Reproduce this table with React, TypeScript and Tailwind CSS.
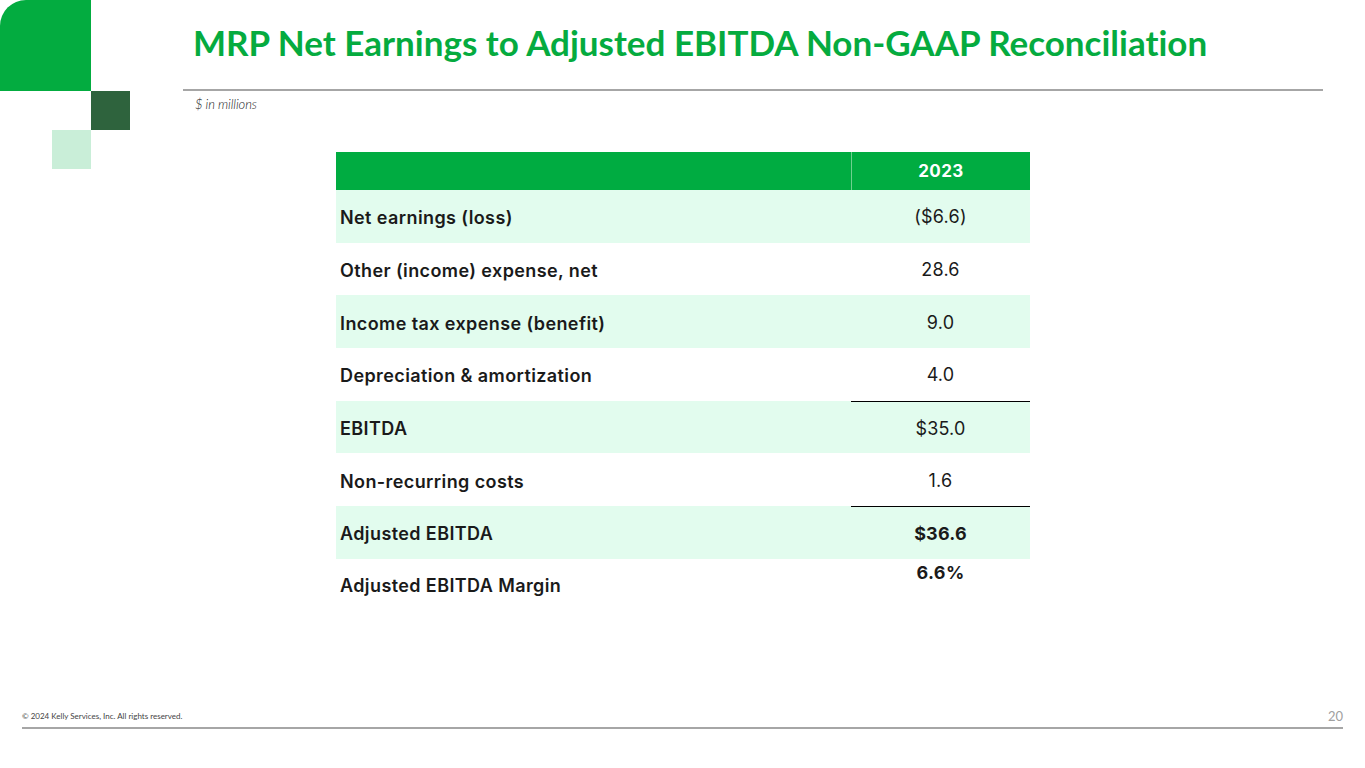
const rows = [
  { label: "Net earnings (loss)", value: "($6.6)", shaded: true },
  { label: "Other (income) expense, net", value: "28.6", shaded: false },
  { label: "Income tax expense (benefit)", value: "9.0", shaded: true },
  { label: "Depreciation & amortization", value: "4.0", shaded: false },
  { label: "EBITDA", value: "$35.0", shaded: true, rule: true },
  { label: "Non-recurring costs", value: "1.6", shaded: false },
  { label: "Adjusted EBITDA", value: "$36.6", shaded: true, rule: true, strong: true },
];

const CornerMark = () => (
  <div className="grid shrink-0 grid-cols-[52px_39px_39px] grid-rows-[91px_39px_39px]">
    <div className="col-span-2 rounded-tl-[26px] bg-[#03ac40]" />
    <div />
    <div />
    <div />
    <div className="bg-[#2e633d]" />
    <div />
    <div className="bg-[#c9eed8]" />
    <div />
  </div>
);

export default function App() {
  return (
    <div
      className="flex h-[768px] w-[1365px] flex-col bg-white text-[#1a1a1a] [font-variant-ligatures:none]"
      style={{ fontFamily: "Lato, 'Open Sans', sans-serif" }}
    >
      <div className="flex">
        <CornerMark />

        <div className="ml-[53px] flex w-[1140px] flex-col">
          <h1 className="pl-[10px] pt-[22px] text-[35px] font-bold leading-[40px] text-[#05ab3f]">
            MRP Net Earnings to Adjusted EBITDA Non-GAAP Reconciliation
          </h1>
          <div className="mt-[27px] h-[2px] bg-[#a6a6a6]" />
          <p className="mt-[5px] pl-[12px] text-[13px] font-light italic leading-[16px] tracking-[-0.1px] text-[#222]">
            $ in millions
          </p>

          {/* Table */}
          <div className="ml-[153px] mt-[40px] w-[694px] font-['Inter',sans-serif]">
            <div className="flex h-[38px] bg-[#00ac41]">
              <div className="flex-1" />
              <div className="flex w-[179px] items-center justify-center border-l border-[#6fd08f] pt-[1px] text-[17px] font-bold tracking-[0.4px] text-white">
                2023
              </div>
            </div>

            {rows.map((row) => (
              <div
                key={row.label}
                className={`flex h-[52.7px] ${row.shaded ? "bg-[#e2fcee]" : "bg-white"}`}
              >
                <div className="flex flex-1 items-center pl-[4px] pt-[3px] text-[18px] font-semibold tracking-[0.4px]">
                  {row.label}
                </div>
                <div
                  className={`flex w-[179px] items-center justify-center pt-[1px] text-[18px] tracking-[0.2px] ${
                    row.rule ? "border-t border-black" : ""
                  } ${row.strong ? "font-bold" : "font-normal"}`}
                >
                  {row.value}
                </div>
              </div>
            ))}

            <div className="flex h-[52px]">
              <div className="flex flex-1 items-center pl-[4px] pt-[1px] text-[18px] font-semibold tracking-[0.4px]">
                Adjusted EBITDA Margin
              </div>
              <div className="flex w-[179px] justify-center text-[18px] font-bold tracking-[0.4px]">
                6.6%
              </div>
            </div>
          </div>
        </div>
      </div>

      <div className="flex-1" />

      <footer className="px-[22px] pb-[39px]">
        <div className="flex items-end justify-between">
          <span className="pb-[3px] text-[8px] leading-[10px] text-[#444]">
            © 2024 Kelly Services, Inc. All rights reserved.
          </span>
          <span className="text-[13px] leading-[16px] text-[#a0a0a0]">20</span>
        </div>
        <div className="mt-[3px] h-[2px] bg-[#a6a6a6]" />
      </footer>
    </div>
  );
}
